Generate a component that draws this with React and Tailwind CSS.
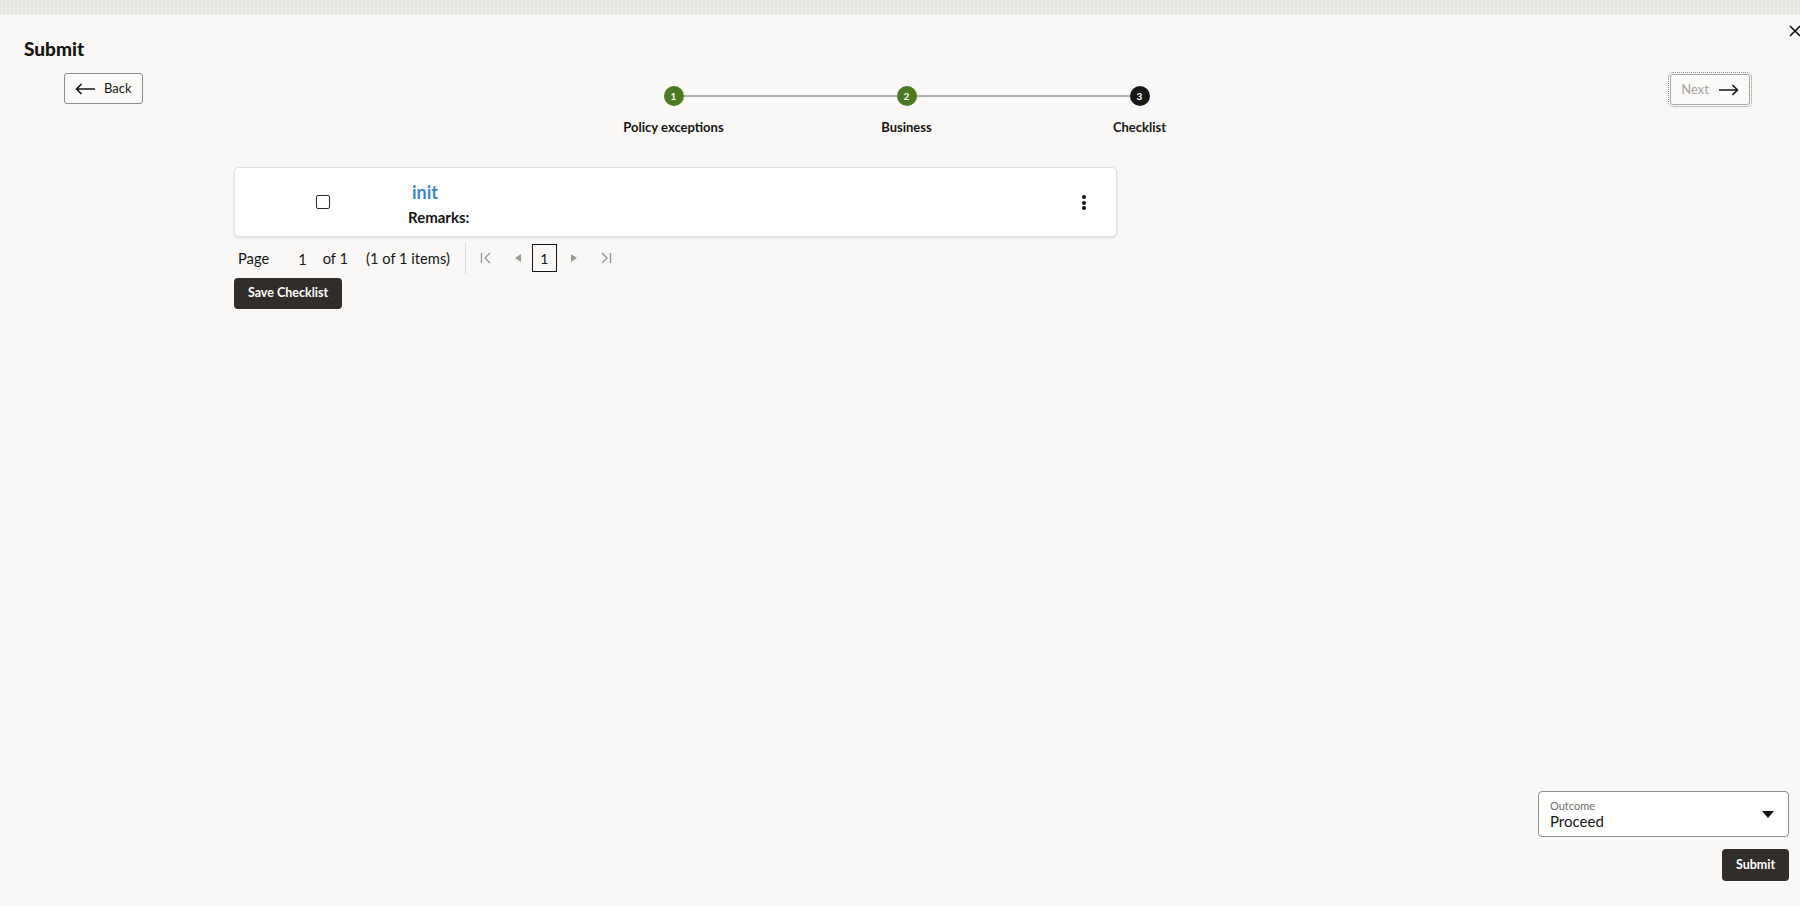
import React from "react";

const steps = [
  { n: 1, label: "Policy exceptions", done: true },
  { n: 2, label: "Business", done: true },
  { n: 3, label: "Checklist", done: false },
];

function Step({ step, first, last }) {
  return (
    <div className="flex w-[233px] flex-col items-center">
      <div className="flex w-full items-center">
        <div className={`h-[2px] flex-1 ${first ? "bg-transparent" : "bg-[#b3b0ad]"}`} />
        <div
          className={`flex h-[20px] w-[20px] items-center justify-center rounded-full text-[10px] font-bold text-white ${
            step.done ? "bg-[#4b7a22]" : "bg-[#1a1816]"
          }`}
        >
          {step.n}
        </div>
        <div className={`h-[2px] flex-1 ${last ? "bg-transparent" : "bg-[#b3b0ad]"}`} />
      </div>
      <div className="mt-[13px] text-[13px] font-bold leading-4 text-[#161513]">{step.label}</div>
    </div>
  );
}

export default function App() {
  return (
    <div
      className="flex h-[906px] w-[1800px] flex-col overflow-hidden bg-[#f9f8f6] text-[#161513]"
      style={{ fontFamily: "Lato, 'Noto Sans', sans-serif" }}
    >
      {/* textured top strip */}
      <div className="h-[15px] bg-[repeating-linear-gradient(90deg,#e6e4e1_0px,#efedea_2px,#e8e6e3_4px)]" />

      {/* title + close */}
      <div className="flex items-start justify-between pl-[24px] pt-[22px]">
        <h1 className="text-[19px] font-black leading-6">Submit</h1>
        <svg width="12" height="12" viewBox="0 0 12 12" className="mr-[-1px] mt-[-12px]">
          <path d="M1 1L11 11M11 1L1 11" stroke="#161513" strokeWidth="1.6" />
        </svg>
      </div>

      {/* back / stepper / next */}
      <div className="mt-[12px] flex h-[72px] items-start">
        <button className="ml-[64px] flex h-[31px] w-[79px] items-center rounded-[3px] border border-[#8f8c89] bg-[#fbfaf9] pl-[10px] text-[13px] text-[#161513]">
          <svg width="21" height="12" viewBox="0 0 21 12">
            <path d="M20 6H1.5M6.5 1L1.5 6l5 5" stroke="#161513" strokeWidth="1.6" fill="none" />
          </svg>
          <span className="ml-[8px]">Back</span>
        </button>

        <div className="ml-[414px] flex pt-[13px]">
          {steps.map((s, i) => (
            <Step key={s.n} step={s} first={i === 0} last={i === steps.length - 1} />
          ))}
        </div>

        <button className="ml-auto mr-[50px] mt-[1px] flex h-[31px] w-[80px] items-center justify-center gap-[10px] rounded-[3px] border border-[#a9a6a3] bg-[#fbfaf9] text-[13px] text-[#a3a19e] outline-1 outline-offset-1 outline-dotted outline-[#8c8a87]">
          <span>Next</span>
          <svg width="20" height="12" viewBox="0 0 20 12">
            <path d="M0 6h18.5M13.5 1l5 5-5 5" stroke="#161513" strokeWidth="1.6" fill="none" />
          </svg>
        </button>
      </div>

      {/* checklist */}
      <div className="ml-[234px] mt-[22px] w-[883px]">
        <div className="flex h-[70px] items-start rounded-[5px] border border-[#dde1e5] bg-white shadow-[0_1px_3px_rgba(0,0,0,0.12)]">
          <div className="ml-[81px] mt-[27px] h-[14px] w-[14px] rounded-[2px] border-[1.5px] border-[#2a2826] bg-white" />
          <div className="ml-[78px] mt-[13px] flex flex-col">
            <span className="ml-[4px] text-[18px] font-bold leading-[22px] text-[#3a88cb]">init</span>
            <span className="mt-[5px] text-[15px] font-bold leading-[18px] text-[#161513]">Remarks:</span>
          </div>
          <div className="ml-auto mr-[30px] mt-[27px] flex flex-col gap-[1.5px]">
            <span className="h-[4px] w-[4px] rounded-full bg-[#161513]" />
            <span className="h-[4px] w-[4px] rounded-full bg-[#161513]" />
            <span className="h-[4px] w-[4px] rounded-full bg-[#161513]" />
          </div>
        </div>

        {/* pagination */}
        <div className="mt-[5px] flex h-[32px] items-center text-[14.7px] text-[#161513]">
          <span className="ml-[4px]">Page</span>
          <span className="ml-[29px] mt-[3px]">1</span>
          <span className="ml-[16px]">of 1</span>
          <span className="ml-[18px]">(1 of 1 items)</span>
          <div className="ml-[15px] h-[32px] w-px bg-[#dedcd9]" />
          <svg width="12" height="12" viewBox="0 0 12 12" className="ml-[14px]">
            <path d="M1.5 1v10M10 1L5 6l5 5" stroke="#9a9895" strokeWidth="1.4" fill="none" />
          </svg>
          <svg width="6" height="8" viewBox="0 0 6 8" className="ml-[23px]">
            <path d="M6 0v8L0 4z" fill="#9a9895" />
          </svg>
          <div className="ml-[11px] flex h-[28px] w-[25px] items-center justify-center border border-[#161513] text-[14px]">
            1
          </div>
          <svg width="6" height="8" viewBox="0 0 6 8" className="ml-[14px]">
            <path d="M0 0v8l6-4z" fill="#9a9895" />
          </svg>
          <svg width="12" height="12" viewBox="0 0 12 12" className="ml-[23px]">
            <path d="M2 1l5 5-5 5M10.5 1v10" stroke="#9a9895" strokeWidth="1.4" fill="none" />
          </svg>
        </div>

        <button className="mt-[4px] h-[31px] w-[108px] rounded-[4px] bg-[#312d2a] text-[12.5px] font-bold text-white">
          Save Checklist
        </button>
      </div>

      {/* outcome + submit */}
      <div className="mt-auto flex flex-col items-end pb-[25px] pr-[11px]">
        <div className="flex h-[46px] w-[251px] items-center justify-between rounded-[4px] border border-[#8f8c89] bg-white pl-[11px] pr-[14px]">
          <div className="flex flex-col">
            <span className="text-[11px] leading-[13px] text-[#6f6c69]">Outcome</span>
            <span className="text-[15px] leading-[18px] text-[#161513]">Proceed</span>
          </div>
          <svg width="12" height="7" viewBox="0 0 12 7">
            <path d="M0 0h12L6 7z" fill="#161513" />
          </svg>
        </div>
        <button className="mt-[12px] h-[32px] w-[67px] rounded-[4px] bg-[#312d2a] text-[12.5px] font-bold text-white">
          Submit
        </button>
      </div>
    </div>
  );
}
